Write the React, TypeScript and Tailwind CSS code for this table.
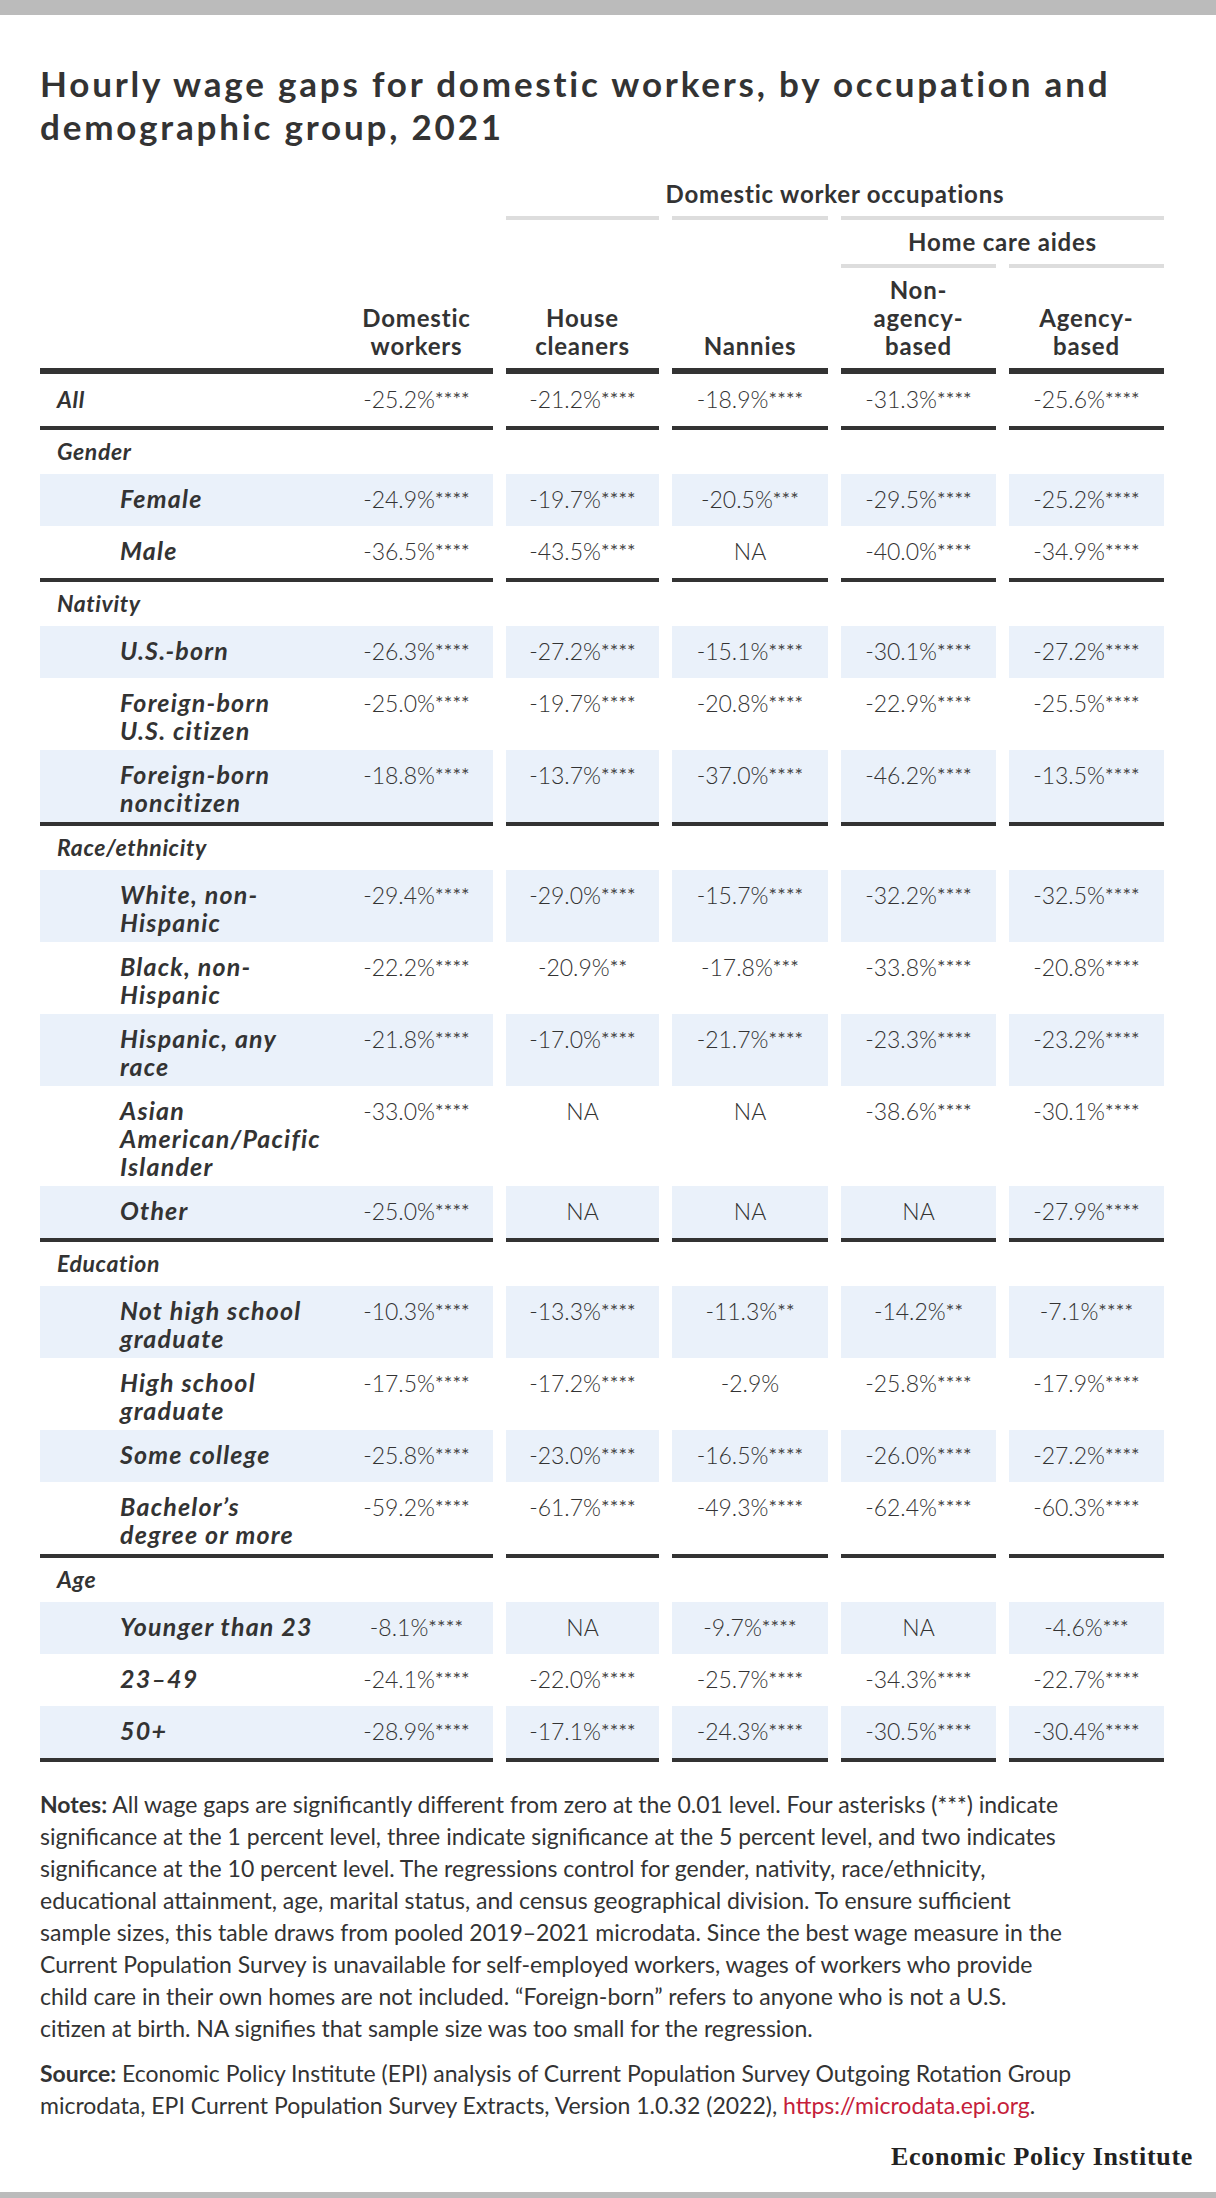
import React from "react";

type Cell = string;
type Row =
  | { kind: "section"; label: string }
  | { kind: "data"; label: string[]; vals: Cell[]; shade: boolean; top?: boolean }
  | { kind: "bar" };

const colW = ["w-[153px]", "w-[156px]", "w-[155px]", "w-[155px]"];

const rows: Row[] = [
  { kind: "data", top: true, label: ["All"], shade: false, vals: ["-25.2%****", "-21.2%****", "-18.9%****", "-31.3%****", "-25.6%****"] },
  { kind: "bar" },
  { kind: "section", label: "Gender" },
  { kind: "data", label: ["Female"], shade: true, vals: ["-24.9%****", "-19.7%****", "-20.5%***", "-29.5%****", "-25.2%****"] },
  { kind: "data", label: ["Male"], shade: false, vals: ["-36.5%****", "-43.5%****", "NA", "-40.0%****", "-34.9%****"] },
  { kind: "bar" },
  { kind: "section", label: "Nativity" },
  { kind: "data", label: ["U.S.-born"], shade: true, vals: ["-26.3%****", "-27.2%****", "-15.1%****", "-30.1%****", "-27.2%****"] },
  { kind: "data", label: ["Foreign-born", "U.S. citizen"], shade: false, vals: ["-25.0%****", "-19.7%****", "-20.8%****", "-22.9%****", "-25.5%****"] },
  { kind: "data", label: ["Foreign-born", "noncitizen"], shade: true, vals: ["-18.8%****", "-13.7%****", "-37.0%****", "-46.2%****", "-13.5%****"] },
  { kind: "bar" },
  { kind: "section", label: "Race/ethnicity" },
  { kind: "data", label: ["White, non-", "Hispanic"], shade: true, vals: ["-29.4%****", "-29.0%****", "-15.7%****", "-32.2%****", "-32.5%****"] },
  { kind: "data", label: ["Black, non-", "Hispanic"], shade: false, vals: ["-22.2%****", "-20.9%**", "-17.8%***", "-33.8%****", "-20.8%****"] },
  { kind: "data", label: ["Hispanic, any", "race"], shade: true, vals: ["-21.8%****", "-17.0%****", "-21.7%****", "-23.3%****", "-23.2%****"] },
  { kind: "data", label: ["Asian", "American/Pacific", "Islander"], shade: false, vals: ["-33.0%****", "NA", "NA", "-38.6%****", "-30.1%****"] },
  { kind: "data", label: ["Other"], shade: true, vals: ["-25.0%****", "NA", "NA", "NA", "-27.9%****"] },
  { kind: "bar" },
  { kind: "section", label: "Education" },
  { kind: "data", label: ["Not high school", "graduate"], shade: true, vals: ["-10.3%****", "-13.3%****", "-11.3%**", "-14.2%**", "-7.1%****"] },
  { kind: "data", label: ["High school", "graduate"], shade: false, vals: ["-17.5%****", "-17.2%****", "-2.9%", "-25.8%****", "-17.9%****"] },
  { kind: "data", label: ["Some college"], shade: true, vals: ["-25.8%****", "-23.0%****", "-16.5%****", "-26.0%****", "-27.2%****"] },
  { kind: "data", label: ["Bachelor\u2019s", "degree or more"], shade: false, vals: ["-59.2%****", "-61.7%****", "-49.3%****", "-62.4%****", "-60.3%****"] },
  { kind: "bar" },
  { kind: "section", label: "Age" },
  { kind: "data", label: ["Younger than 23"], shade: true, vals: ["-8.1%****", "NA", "-9.7%****", "NA", "-4.6%***"] },
  { kind: "data", label: ["23\u201349"], shade: false, vals: ["-24.1%****", "-22.0%****", "-25.7%****", "-34.3%****", "-22.7%****"] },
  { kind: "data", label: ["50+"], shade: true, vals: ["-28.9%****", "-17.1%****", "-24.3%****", "-30.5%****", "-30.4%****"] },
  { kind: "bar" },
];

function Value({ v }: { v: string }) {
  const m = v.match(/^([^*]*)(\**)$/);
  const num = m ? m[1] : v;
  const stars = m ? m[2] : "";
  return (
    <div className="pt-[7px] pb-[9px] text-center text-[23px] leading-[36px] font-light text-[#333]">
      {num}
      {stars && <span className="text-[20px] leading-none font-normal align-[2px] tracking-[0.2px] text-[#444]">{stars}</span>}
    </div>
  );
}

function Bar({ h }: { h: string }) {
  return (
    <div className="flex gap-[13px]">
      <div className={`w-[453px] ${h} bg-[#333]`} />
      {colW.map((w, i) => (
        <div key={i} className={`${w} ${h} bg-[#333]`} />
      ))}
    </div>
  );
}

function DataRow({ r }: { r: Extract<Row, { kind: "data" }> }) {
  const bg = r.shade ? "bg-[#eaf1fa]" : "";
  const labelCls = r.top
    ? "pl-[17px] pt-[11px] pb-[5px] text-[23px] tracking-[0.6px]"
    : "pl-[80px] pt-[10px] pb-[6px] text-[25px] tracking-[1.2px]";
  return (
    <div className="flex gap-[13px]">
      <div className={`w-[453px] flex ${bg}`}>
        <div className={`w-[300px] ${labelCls} leading-[28px] font-bold italic text-[#333] whitespace-nowrap`}>
          {r.label.map((l, i) => (
            <div key={i}>{l}</div>
          ))}
        </div>
        <div className="flex-1">
          <Value v={r.vals[0]} />
        </div>
      </div>
      {colW.map((w, i) => (
        <div key={i} className={`${w} ${bg}`}>
          <Value v={r.vals[i + 1]} />
        </div>
      ))}
    </div>
  );
}

export default function App() {
  return (
    <div className="w-[1216px] bg-white font-['Lato',sans-serif] text-[#333]">
      <div className="h-[15px] bg-[#bbbbbb]" />
      <div className="px-[40px] pt-[47px]">
        <h1 className="text-[35px] leading-[43px] font-bold tracking-[2.8px] text-[#333] whitespace-nowrap">
          Hourly wage gaps for domestic workers, by occupation and
          <br />
          demographic group, 2021
        </h1>

        <div className="mt-[24px] w-[1124px]">
          {/* header group row */}
          <div className="flex gap-[13px] text-[24px] leading-[28px] font-bold tracking-[0.8px]">
            <div className="w-[453px]" />
            <div className="w-[658px] pt-[8px] pb-[8px] text-center">Domestic worker occupations</div>
          </div>
          <div className="flex gap-[13px]">
            <div className="w-[453px]" />
            <div className="w-[153px] h-[4px] bg-[#dddddd]" />
            <div className="w-[156px] h-[4px] bg-[#dddddd]" />
            <div className="w-[323px] h-[4px] bg-[#dddddd]" />
          </div>
          <div className="flex gap-[13px] text-[24px] leading-[28px] font-bold tracking-[0.8px]">
            <div className="w-[453px]" />
            <div className="w-[153px]" />
            <div className="w-[156px]" />
            <div className="w-[323px] pt-[8px] pb-[8px] text-center">Home care aides</div>
          </div>
          <div className="flex gap-[13px]">
            <div className="w-[453px]" />
            <div className="w-[153px]" />
            <div className="w-[156px]" />
            <div className="w-[155px] h-[4px] bg-[#dddddd]" />
            <div className="w-[155px] h-[4px] bg-[#dddddd]" />
          </div>
          {/* column headers */}
          <div className="flex gap-[13px] text-[24px] leading-[28px] font-bold tracking-[0.8px] text-center">
            <div className="w-[453px] flex">
              <div className="w-[300px]" />
              <div className="flex-1 flex flex-col justify-end pt-[8px] pb-[8px]">
                <div>Domestic</div>
                <div>workers</div>
              </div>
            </div>
            <div className="w-[153px] flex flex-col justify-end pt-[8px] pb-[8px]">
              <div>House</div>
              <div>cleaners</div>
            </div>
            <div className="w-[156px] flex flex-col justify-end pt-[8px] pb-[8px]">
              <div>Nannies</div>
            </div>
            <div className="w-[155px] flex flex-col justify-end pt-[8px] pb-[8px]">
              <div>Non-</div>
              <div>agency-</div>
              <div>based</div>
            </div>
            <div className="w-[155px] flex flex-col justify-end pt-[8px] pb-[8px]">
              <div>Agency-</div>
              <div>based</div>
            </div>
          </div>
          <Bar h="h-[6px]" />

          {rows.map((r, i) => {
            if (r.kind === "bar") return <Bar key={i} h="h-[4px]" />;
            if (r.kind === "section")
              return (
                <div
                  key={i}
                  className="pl-[17px] pt-[7px] pb-[9px] text-[23px] tracking-[0.6px] leading-[28px] font-bold italic"
                >
                  {r.label}
                </div>
              );
            return <DataRow key={i} r={r} />;
          })}
        </div>

        <div className="mt-[26px] text-[23px] leading-[32px] text-[#333] whitespace-nowrap">
          <p>
            <span className="font-bold">Notes:</span> All wage gaps are significantly different from zero at the 0.01 level. Four asterisks (***) indicate
            <br />
            significance at the 1 percent level, three indicate significance at the 5 percent level, and two indicates
            <br />
            significance at the 10 percent level. The regressions control for gender, nativity, race/ethnicity,
            <br />
            educational attainment, age, marital status, and census geographical division. To ensure sufficient
            <br />
            sample sizes, this table draws from pooled 2019–2021 microdata. Since the best wage measure in the
            <br />
            Current Population Survey is unavailable for self-employed workers, wages of workers who provide
            <br />
            child care in their own homes are not included. “Foreign-born” refers to anyone who is not a U.S.
            <br />
            citizen at birth. NA signifies that sample size was too small for the regression.
          </p>
          <p className="mt-[13px]">
            <span className="font-bold">Source:</span> Economic Policy Institute (EPI) analysis of Current Population Survey Outgoing Rotation Group
            <br />
            microdata, EPI Current Population Survey Extracts, Version 1.0.32 (2022),{" "}
            <span className="text-[#c5203a]">https://microdata.epi.org</span>.
          </p>
        </div>
      </div>
      <div className="flex justify-end pr-[23px] pt-[20px] pb-[20px]">
        <div className="font-['Liberation_Serif',serif] font-bold text-[26px] leading-[31px] tracking-[0.7px] text-[#222]">
          Economic Policy Institute
        </div>
      </div>
      <div className="h-[6px] bg-[#bbbbbb]" />
    </div>
  );
}
